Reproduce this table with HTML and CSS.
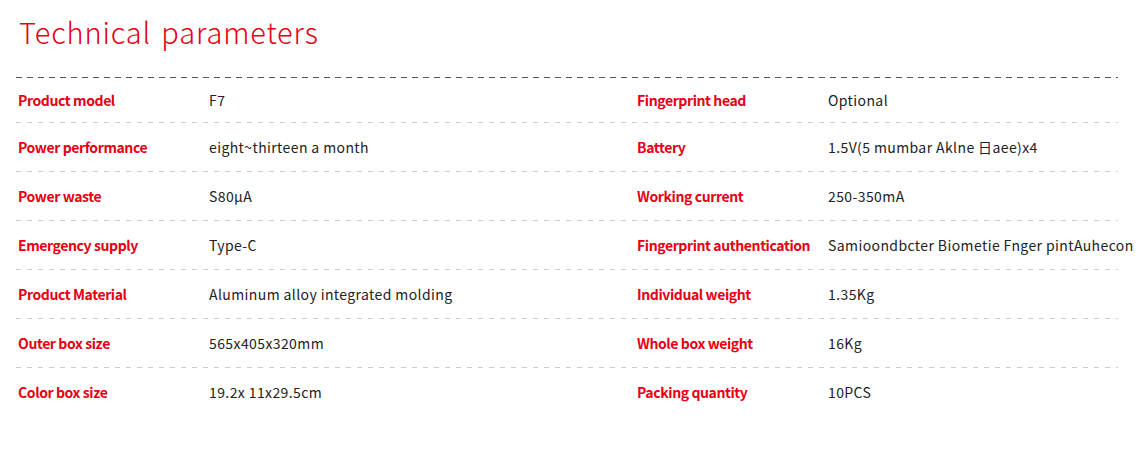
FILE: index.html
```html
<!DOCTYPE html>
<html lang="en">
<head>
<meta charset="utf-8">
<title>Technical parameters</title>
<link rel="stylesheet" href="styles.css">
</head>
<body>
<section class="params">
  <h1 class="params-title">Technical parameters</h1>
  <div class="params-table">
    <div class="row">
      <div class="label">Product model</div><div class="value">F7</div>
      <div class="label">Fingerprint head</div><div class="value">Optional</div>
    </div>
    <div class="row">
      <div class="label">Power performance</div><div class="value">eight~thirteen a month</div>
      <div class="label">Battery</div><div class="value">1.5V(5 mumbar Aklne 日aee)x4</div>
    </div>
    <div class="row">
      <div class="label">Power waste</div><div class="value">S80μA</div>
      <div class="label">Working current</div><div class="value">250-350mA</div>
    </div>
    <div class="row">
      <div class="label">Emergency supply</div><div class="value">Type-C</div>
      <div class="label">Fingerprint authentication</div><div class="value">Samioondbcter Biometie Fnger pintAuhecon</div>
    </div>
    <div class="row">
      <div class="label">Product Material</div><div class="value">Aluminum alloy integrated molding</div>
      <div class="label">Individual weight</div><div class="value">1.35Kg</div>
    </div>
    <div class="row">
      <div class="label">Outer box size</div><div class="value">565x405x320mm</div>
      <div class="label">Whole box weight</div><div class="value">16Kg</div>
    </div>
    <div class="row">
      <div class="label">Color box size</div><div class="value">19.2x 11x29.5cm</div>
      <div class="label">Packing quantity</div><div class="value">10PCS</div>
    </div>
  </div>
</section>
</body>
</html>
```
FILE: styles.css
```css
html, body {
  margin: 0;
  padding: 0;
  background: #ffffff;
}

body {
  font-family: "Noto Sans CJK SC", "Noto Sans", sans-serif;
  color: #222222;
}

.params {
  padding: 11px 0 0 16px;
}

.params-title {
  margin: 0 0 0 3px;
  font-size: 29px;
  font-weight: 300;
  line-height: 40px;
  letter-spacing: 0.85px;
  word-spacing: 3px;
  color: #e60012;
}

.params-table {
  margin-top: 26px;
  width: 1102px;
  background-image: linear-gradient(to right, #555555 0 6px, transparent 6px 11px);
  background-size: 11px 1px;
  background-repeat: repeat-x;
  background-position: left top;
  padding-top: 1px;
}

.row {
  display: flex;
  align-items: center;
  width: 1102px;
  height: 48px;
  background-image: linear-gradient(to right, #cccccc 0 5px, transparent 5px 11px);
  background-size: 11px 1px;
  background-repeat: repeat-x;
  background-position: left bottom;
  padding-bottom: 1px;
}

.row:first-child {
  height: 44px;
}

.row:last-child {
  background-image: none;
}

.label {
  flex: none;
  box-sizing: border-box;
  width: 193px;
  padding-left: 2px;
  font-size: 14px;
  font-weight: 700;
  letter-spacing: -0.4px;
  color: #e60012;
  white-space: nowrap;
}

.value {
  flex: none;
  width: 426px;
  font-size: 14px;
  letter-spacing: 0.4px;
  color: #222222;
  white-space: nowrap;
}

.row .value:last-child {
  width: auto;
}
```
